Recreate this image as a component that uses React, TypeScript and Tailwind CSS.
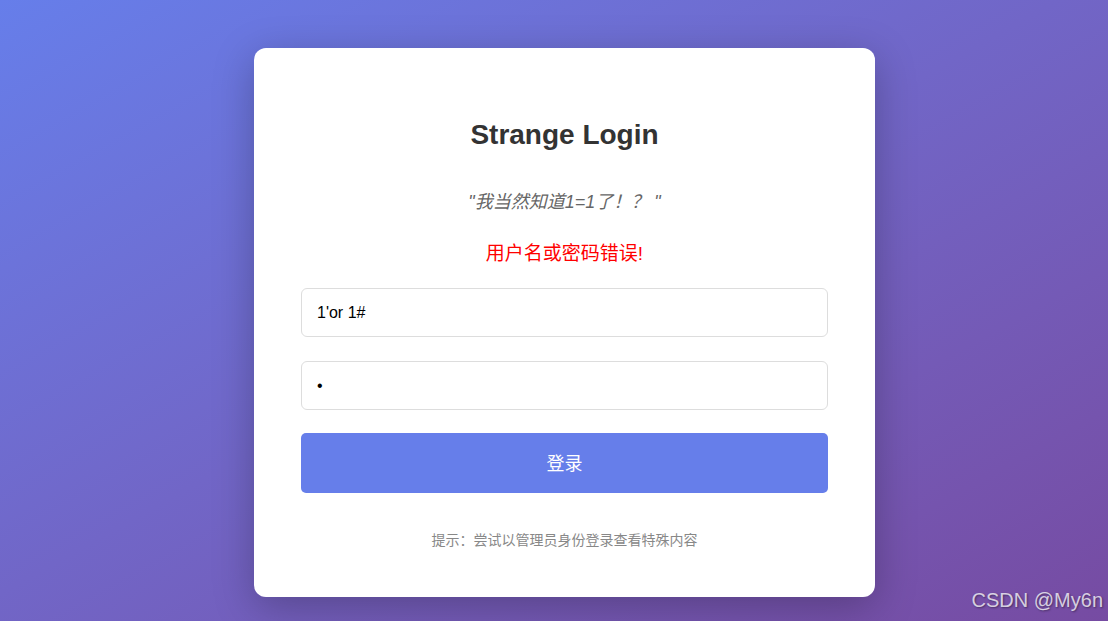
import React from "react";

const App = () => {
  return (
    <div
      className="relative w-[1108px] h-[621px] overflow-hidden bg-gradient-to-br from-[#667eea] to-[#764ba2]"
      style={{ fontFamily: '"Liberation Sans", Arial, "Noto Sans CJK SC", sans-serif' }}
    >
      <div className="absolute left-[254px] top-[48px] w-[621px] rounded-xl bg-white px-[47px] pt-[70px] pb-[46px] shadow-[0_10px_40px_rgba(0,0,0,0.25)]">
        <h1 className="text-center text-[28px] leading-[34px] font-bold text-[#333]">
          Strange Login
        </h1>

        <p className="mt-[37px] text-center text-[18px] leading-[27px] italic text-[#666]">
          "我当然知道1=1了！？ "
        </p>

        <p className="mt-[24px] text-center text-[19px] leading-[27px] text-[#ff0000]">
          用户名或密码错误!
        </p>

        <div className="mt-[21px] flex flex-col gap-[24px]">
          <input
            type="text"
            defaultValue="1'or 1#"
            className="h-[49px] w-full rounded-md border border-[#ddd] px-[15px] text-[16px] text-black outline-none"
          />
          <input
            type="password"
            defaultValue="1"
            className="h-[49px] w-full rounded-md border border-[#ddd] px-[15px] text-[16px] text-black outline-none"
          />
        </div>

        <button className="mt-[23px] h-[60px] w-full rounded-[5px] bg-[#667eea] pt-[3px] text-[18px] text-white">
          登录
        </button>

        <p className="mt-[37px] text-center text-[14px] leading-[21px] text-[#888]">
          提示：尝试以管理员身份登录查看特殊内容
        </p>
      </div>

      <div className="absolute right-[5px] bottom-[6px] text-[20px] text-white/75 [text-shadow:1px_1px_2px_rgba(0,0,0,0.4)]">
        CSDN @My6n
      </div>
    </div>
  );
};

export default App;
